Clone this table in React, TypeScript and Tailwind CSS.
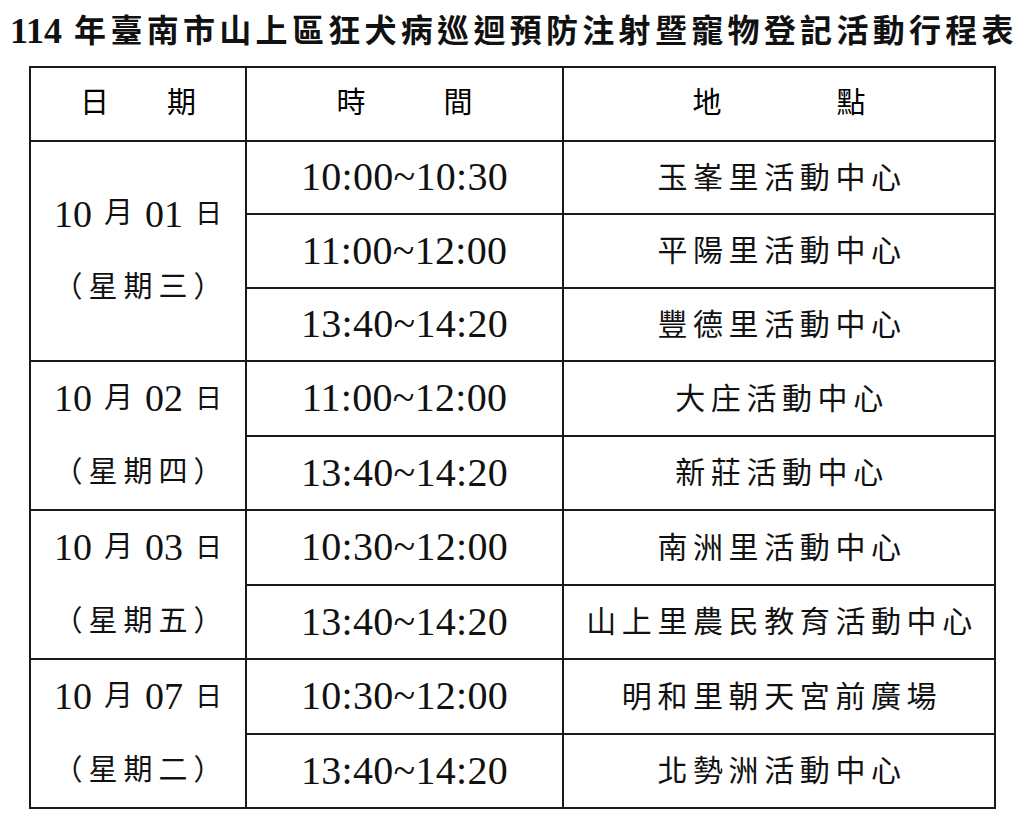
const font = "font-['Liberation_Serif','Noto_Sans_CJK_TC',serif]";

type Group = { date: string; weekday: string; slots: [string, string][] };

const groups: Group[] = [
  {
    date: "01",
    weekday: "三",
    slots: [
      ["10:00~10:30", "玉峯里活動中心"],
      ["11:00~12:00", "平陽里活動中心"],
      ["13:40~14:20", "豐德里活動中心"],
    ],
  },
  {
    date: "02",
    weekday: "四",
    slots: [
      ["11:00~12:00", "大庄活動中心"],
      ["13:40~14:20", "新莊活動中心"],
    ],
  },
  {
    date: "03",
    weekday: "五",
    slots: [
      ["10:30~12:00", "南洲里活動中心"],
      ["13:40~14:20", "山上里農民教育活動中心"],
    ],
  },
  {
    date: "07",
    weekday: "二",
    slots: [
      ["10:30~12:00", "明和里朝天宮前廣場"],
      ["13:40~14:20", "北勢洲活動中心"],
    ],
  },
];

function DateCell({ date, weekday }: { date: string; weekday: string }) {
  return (
    <div className="flex flex-col items-center">
      <div className="flex h-[73.5px] items-center gap-[12px] text-[#111]">
        <span className="text-[38px]">10</span>
        <span className="text-[29px]">月</span>
        <span className="text-[38px]">{date}</span>
        <span className="text-[27px]">日</span>
      </div>
      <div className="flex h-[73.5px] items-center pl-[6px] text-[29px] tracking-[6px] text-[#111]">
        （星期{weekday}）
      </div>
    </div>
  );
}

export default function App() {
  return (
    <div className={`${font} h-[821px] w-[1024px] bg-white text-black`}>
      <h1 className="flex h-[62px] items-center justify-center pl-[4px] text-[32px] font-bold tracking-[4.3px] text-[#111]">
        <span className="mr-[12px] text-[36px] tracking-normal">114</span>
        年臺南市山上區狂犬病巡迴預防注射暨寵物登記活動行程表
      </h1>
      <table className="ml-[29px] mt-[4px] w-[965px] table-fixed border-collapse border-2 border-[#1a1a1a]">
        <colgroup>
          <col className="w-[216px]" />
          <col className="w-[317px]" />
          <col className="w-[432px]" />
        </colgroup>
        <thead>
          <tr className="h-[73.5px]">
            <th className="border-2 border-[#1a1a1a] p-0 font-normal">
              <div className="flex justify-center gap-[58px] text-[29px]">
                <span>日</span>
                <span>期</span>
              </div>
            </th>
            <th className="border-2 border-[#1a1a1a] p-0 font-normal">
              <div className="flex justify-center gap-[78px] text-[29px]">
                <span>時</span>
                <span>間</span>
              </div>
            </th>
            <th className="border-2 border-[#1a1a1a] p-0 font-normal">
              <div className="flex justify-center gap-[115px] text-[29px]">
                <span>地</span>
                <span>點</span>
              </div>
            </th>
          </tr>
        </thead>
        <tbody>
          {groups.map((g) =>
            g.slots.map(([time, place], i) => (
              <tr key={g.date + i} className="h-[73.5px]">
                {i === 0 && (
                  <td rowSpan={g.slots.length} className="border-2 border-[#1a1a1a] p-0 align-middle">
                    <DateCell date={g.date} weekday={g.weekday} />
                  </td>
                )}
                <td className="border-2 border-[#1a1a1a] p-0 text-center text-[40px] tracking-[0.3px] text-[#111]">
                  {time}
                </td>
                <td className="border-2 border-[#1a1a1a] p-0 pl-[6px] text-center text-[30px] tracking-[5.6px] text-[#111]">
                  {place}
                </td>
              </tr>
            ))
          )}
        </tbody>
      </table>
    </div>
  );
}
